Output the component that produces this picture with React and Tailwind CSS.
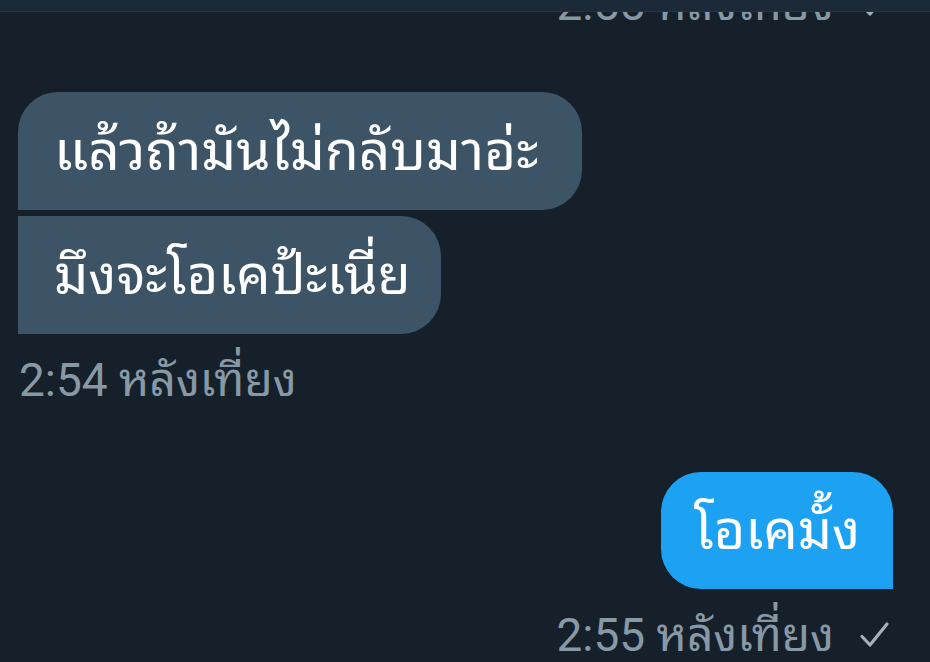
import React from "react";

function Check() {
  return (
    <svg viewBox="0 0 32 32" className="w-[32px] h-[32px] text-[#a3b1bc]" fill="none" stroke="currentColor" strokeWidth="3.2" strokeLinecap="round" strokeLinejoin="round">
      <path d="M4 17.5l8 8.5L29 5" />
    </svg>
  );
}

function Stamp({ time, sent }) {
  return (
    <div className={`flex items-center text-[46px] leading-[52px] text-[#8899a6] ${sent ? "justify-end gap-[24px] pr-[40px]" : "pl-[19px]"}`}>
      <span>{time} หลังเที่ยง</span>
      {sent && <Check />}
    </div>
  );
}

export default function App() {
  return (
    <div className="relative w-[930px] h-[662px] overflow-hidden bg-[#16202b] font-['Roboto','Noto_Sans_Thai_Looped','Noto_Sans_Thai',sans-serif]">
      {/* Header strip */}
      <div className="absolute top-0 left-0 right-0 h-[12px] bg-[#1c2938] border-b border-[#263442] z-10" />

      <div className="flex flex-col">
        <div className="-mt-[22px]">
          <Stamp time="2:55" sent />
        </div>

        <div className="mt-[62px] flex flex-col items-start gap-[6px] pl-[18px]">
          <div className="h-[118px] flex items-center pl-[36px] pr-[44px] bg-[#3d5466] text-white text-[55px] rounded-[40px] rounded-bl-none">
            แล้วถ้ามันไม่กลับมาอ่ะ
          </div>
          <div className="h-[118px] flex items-center pl-[36px] pr-[30px] bg-[#3d5466] text-white text-[54px] rounded-r-[40px]">
            มึงจะโอเคป้ะเนี่ย
          </div>
        </div>

        <div className="mt-[20px]">
          <Stamp time="2:54" />
        </div>

        <div className="mt-[66px] flex justify-end pr-[37px]">
          <div className="h-[117px] flex items-center px-[33px] bg-[#1da1f2] text-white text-[54px] rounded-[40px] rounded-br-none">
            โอเคมั้ง
          </div>
        </div>

        <div className="mt-[20px]">
          <Stamp time="2:55" sent />
        </div>
      </div>
    </div>
  );
}
